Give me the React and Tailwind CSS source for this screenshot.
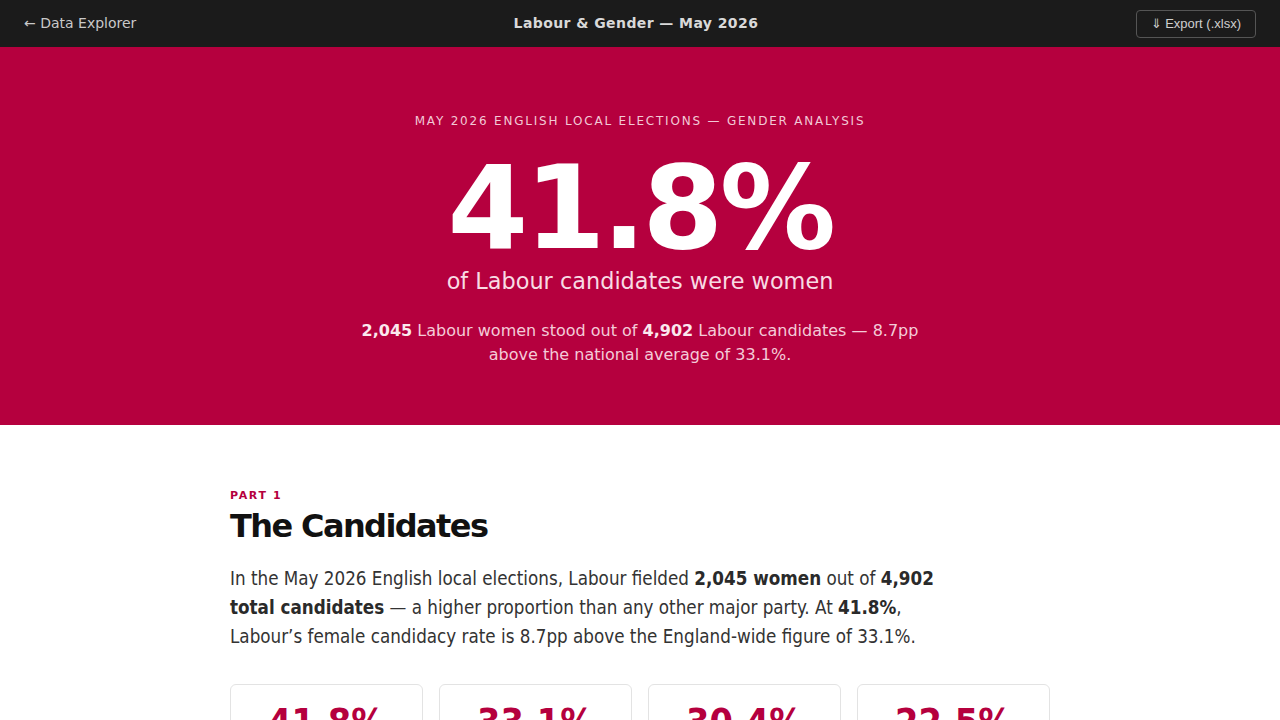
import React from "react";

const stats = [
  { value: "41.8%", label: "Labour" },
  { value: "33.1%", label: "England average" },
  { value: "30.4%", label: "Conservative" },
  { value: "22.5%", label: "Reform UK" },
];

function TopBar() {
  return (
    <header className="flex h-[47px] items-center justify-between bg-[#1b1b1b] px-6">
      <a className="text-[14px] text-[#c9c9c9]" href="#">
        ← Data Explorer
      </a>
      <div className="text-[14px] font-bold tracking-[0.03em] text-[#d9d9d9]">
        Labour &amp; Gender — May 2026
      </div>
      <button className="flex h-[28px] items-center rounded-[4px] border border-[#555] px-[14px] text-[13px] text-[#cfcfcf] [font-family:'Liberation_Sans',Arial,sans-serif]">
        ⇓ Export (.xlsx)
      </button>
    </header>
  );
}

function Hero() {
  return (
    <section className="flex flex-col items-center bg-[#b5003e] pt-[64px] pb-[58px] text-center">
      <div className="text-[12px] leading-[20px] tracking-[0.15em] text-[#f2c9d6] uppercase">
        May 2026 English local elections — gender analysis
      </div>
      <div className="mt-[19px] text-[116px] leading-none font-bold tracking-[-0.03em] text-white">
        41.8%
      </div>
      <div className="-mt-[1px] text-[22.4px] leading-[32px] text-[#f8dbe4]">
        of Labour candidates were women
      </div>
      <p className="mt-[22px] max-w-[580px] text-[16px] leading-[24px] text-[#f4cbd8]">
        <strong className="font-bold text-[#fbe8ee]">2,045</strong> Labour women stood out of{" "}
        <strong className="font-bold text-[#fbe8ee]">4,902</strong> Labour candidates — 8.7pp above the
        national average of 33.1%.
      </p>
    </section>
  );
}

function Candidates() {
  return (
    <section className="mx-auto w-[820px] pt-[63px] pb-16">
      <div className="text-[11px] leading-[16px] font-bold tracking-[0.15em] text-[#b5003e]">PART 1</div>
      <h2 className="mt-[3px] text-[32px] leading-[38px] font-bold tracking-[-0.05em] text-[#111]">
        The Candidates
      </h2>
      <p className="mt-[20px] max-w-[720px] text-[18.66px] leading-[28.8px] text-[#333] [font-family:'DejaVu_Sans_Condensed','DejaVu_Sans',sans-serif] font-stretch-condensed">
        In the May 2026 English local elections, Labour fielded <strong className="text-[#2a2a2a]">2,045 women</strong>{" "}
        out of <strong className="text-[#2a2a2a]">4,902 total candidates</strong> — a higher proportion than any other
        major party. At <strong className="text-[#2a2a2a]">41.8%</strong>, Labour’s female candidacy rate is 8.7pp
        above the England-wide figure of 33.1%.
      </p>
      <div className="mt-[33px] grid grid-cols-4 gap-4">
        {stats.map((s) => (
          <div key={s.value} className="rounded-[6px] border border-[#e3e3e3] px-4 pt-[15px] pb-5 text-center">
            <div className="text-[37.5px] leading-[44px] font-bold text-[#b5003e] [font-family:'DejaVu_Sans_Condensed','DejaVu_Sans',sans-serif] font-stretch-condensed">
              {s.value}
            </div>
            <div className="mt-1 text-[13px] text-[#666]">{s.label}</div>
          </div>
        ))}
      </div>
    </section>
  );
}

export default function App() {
  return (
    <div className="min-h-screen bg-white [font-family:'DejaVu_Sans',sans-serif]">
      <TopBar />
      <Hero />
      <Candidates />
    </div>
  );
}
